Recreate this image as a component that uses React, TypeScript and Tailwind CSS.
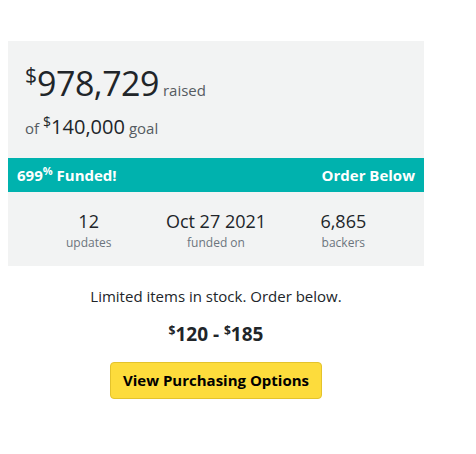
import React from "react";

const font = { fontFamily: '"Segoe UI", "Open Sans", "Noto Sans", sans-serif' };

const Stat = ({ value, label }: { value: string; label: string }) => (
    <div className="flex flex-col items-center">
        <div className="text-[18px] leading-[24px] text-[#212529]">{value}</div>
        <div className="mt-[2px] text-[12px] leading-[16px] text-[#6c757d]">{label}</div>
    </div>
);

export default function App() {
    return (
        <div className="min-h-[454px] bg-white pt-[41px] pl-[8px]" style={font}>
            <div className="w-[416px]">
                {/* Funding summary */}
                <div className="bg-[#f2f3f3] px-[17px] pt-[19px] pb-[17px]">
                    <div className="flex items-baseline text-[#212529]">
                        <span className="self-start text-[21px] leading-[30px]">$</span>
                        <span className="text-[34px] leading-[46px] tracking-[-0.5px]">978,729</span>
                        <span className="ml-[4px] text-[15px] text-[#555b61]">raised</span>
                    </div>
                    <div className="mt-[7px] flex items-baseline text-[#212529]">
                        <span className="text-[15px] text-[#555b61]">of</span>
                        <span className="ml-[4px] self-start text-[14px] leading-[18px]">$</span>
                        <span className="text-[20px] leading-[28px]">140,000</span>
                        <span className="ml-[4px] text-[15px] text-[#555b61]">goal</span>
                    </div>
                </div>

                <div className="flex h-[34px] items-center justify-between bg-[#00b2ae] px-[9px] text-[15px] font-bold text-white">
                    <span>
                        699<sup className="text-[11px]">%</sup> Funded!
                    </span>
                    <span>Order Below</span>
                </div>

                <div className="grid grid-cols-3 bg-[#f2f3f3] px-[17px] pt-[17px] pb-[15px]">
                    <Stat value="12" label="updates" />
                    <Stat value="Oct 27 2021" label="funded on" />
                    <Stat value="6,865" label="backers" />
                </div>

                {/* Order */}
                <div className="flex flex-col items-center pt-[19px]">
                    <p className="text-[15px] leading-[22px] text-[#212529]">
                        Limited items in stock. Order below.
                    </p>
                    <p className="mt-[15px] text-[19px] font-bold leading-[24px] text-[#212529]">
                        <sup className="text-[12px]">$</sup>120 - <sup className="text-[12px]">$</sup>185
                    </p>
                    <button
                        type="button"
                        className="mt-[16px] h-[37px] rounded-[4px] border border-[#e4c32c] bg-[#fddc3c] px-[12px] text-[15px] font-bold text-black"
                    >
                        View Purchasing Options
                    </button>
                </div>
            </div>
        </div>
    );
}
